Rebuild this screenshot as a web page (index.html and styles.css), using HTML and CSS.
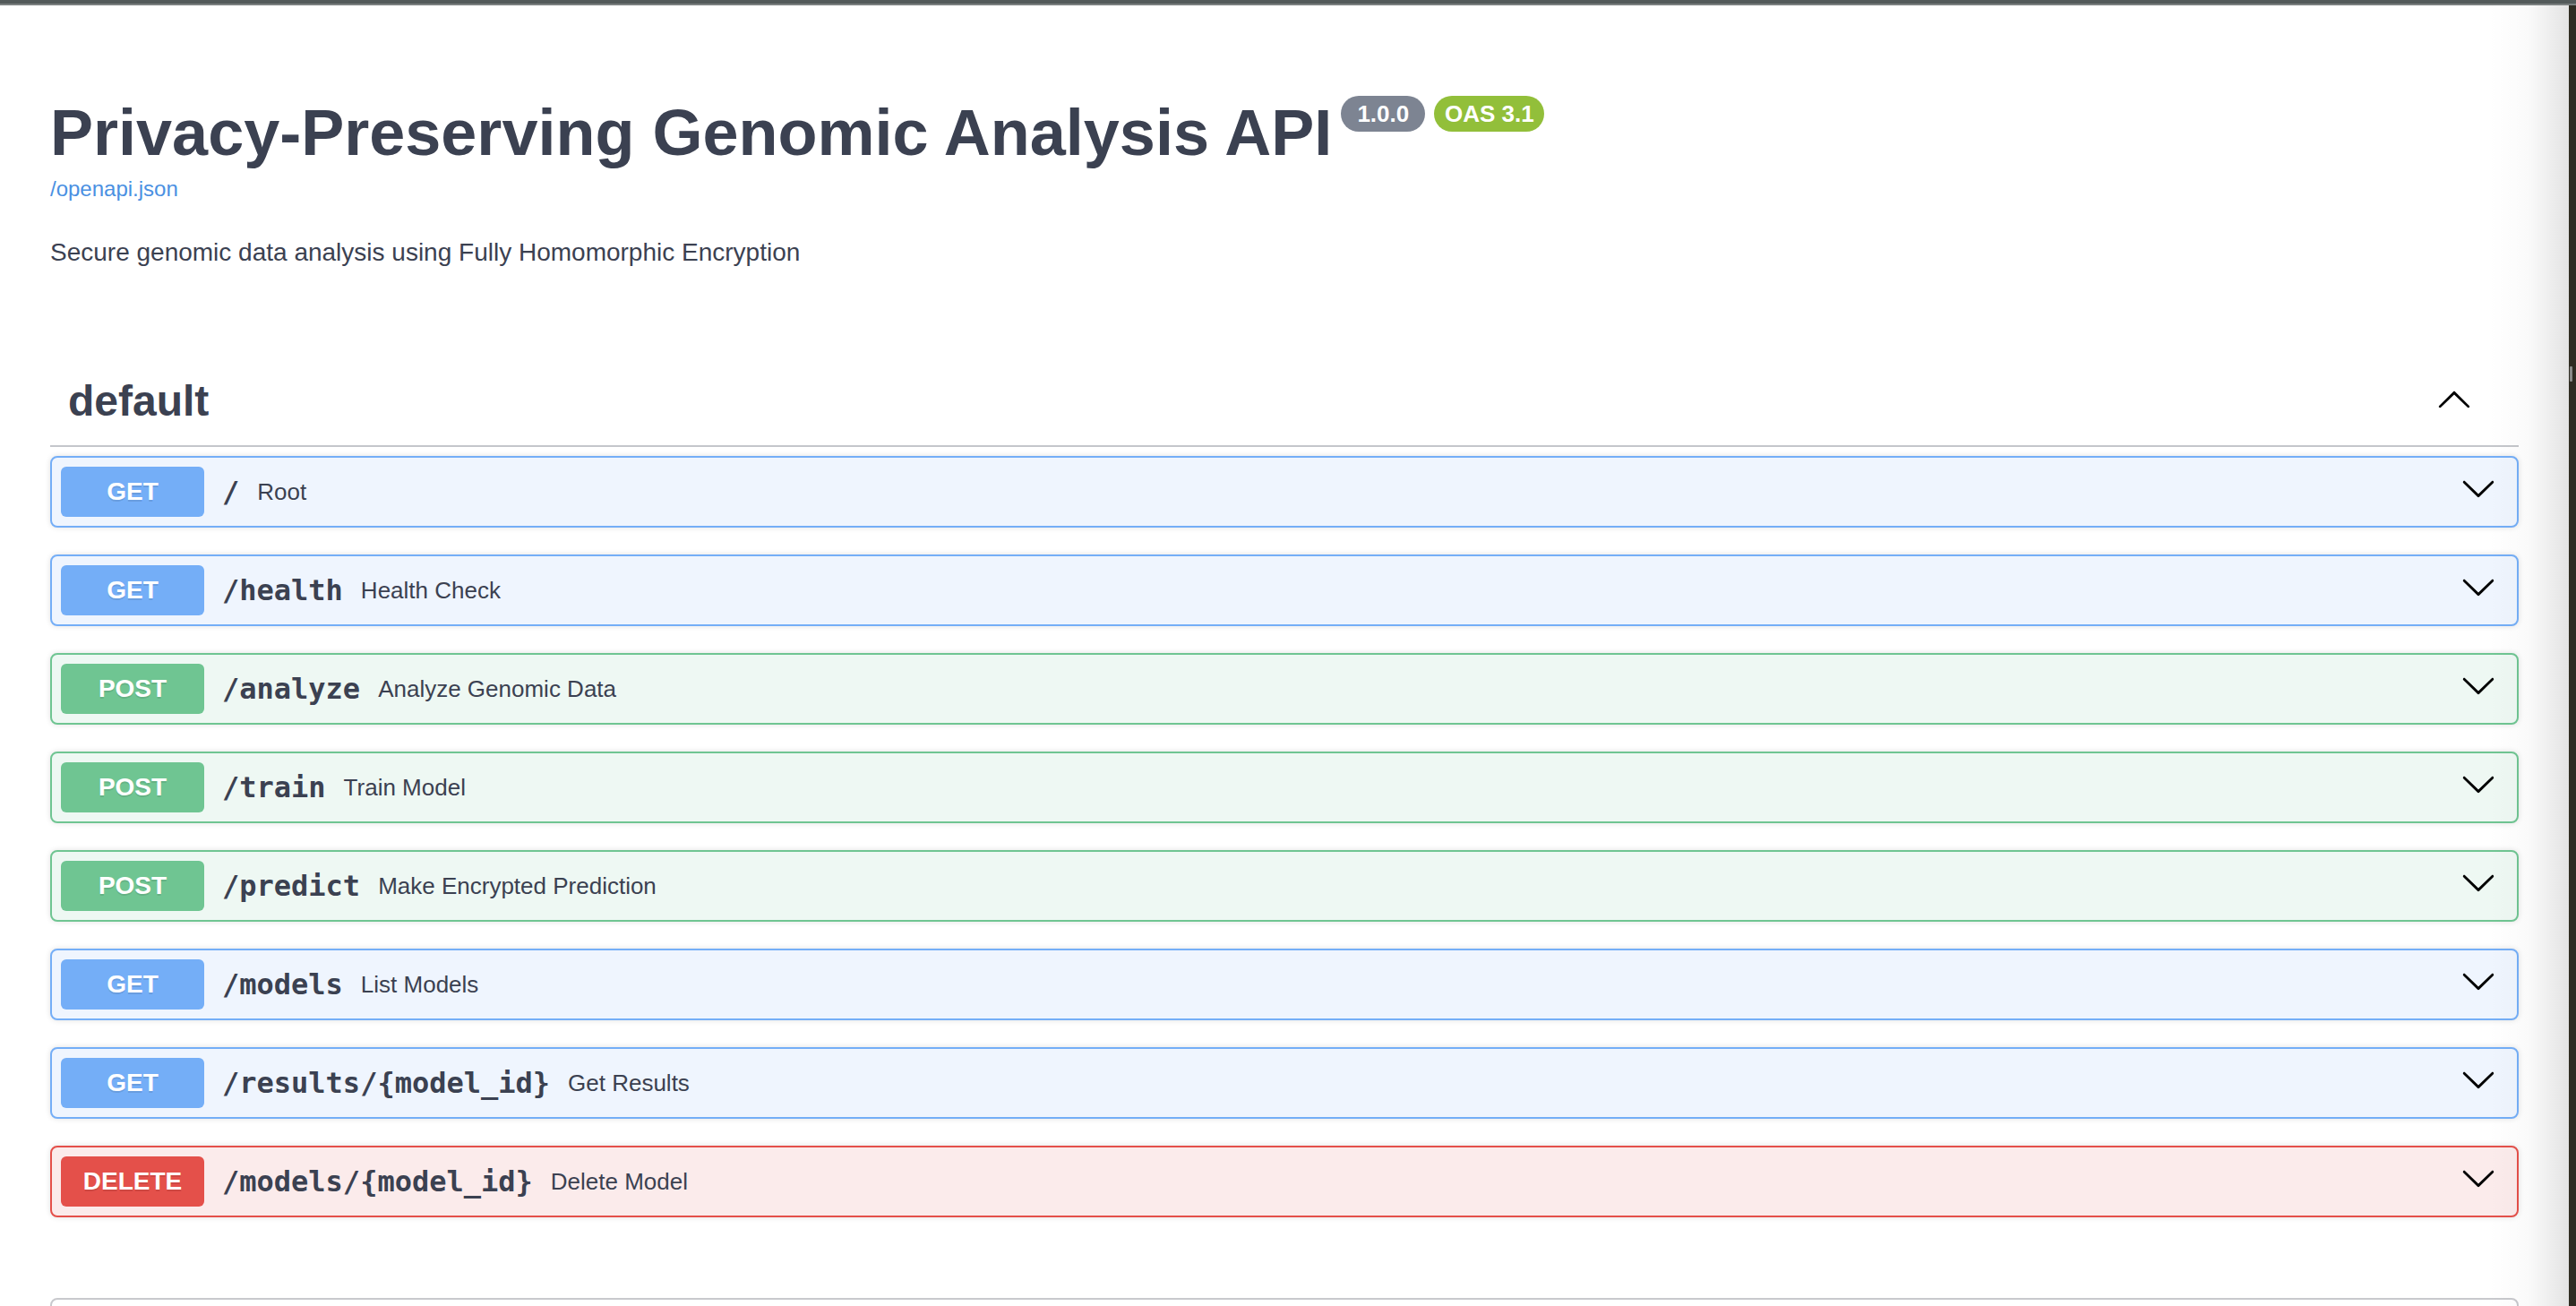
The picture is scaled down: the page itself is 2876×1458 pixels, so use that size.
FILE: index.html
```html
<!DOCTYPE html>
<html lang="en">
<head>
<meta charset="utf-8">
<title>Privacy-Preserving Genomic Analysis API - Swagger UI</title>
<link rel="stylesheet" href="styles.css">
</head>
<body>
<div class="topbar"></div>
<div class="window">
  <div class="page">
    <div class="wrapper">
      <header class="info">
        <div class="title-row">
          <h1 class="title">Privacy-Preserving Genomic Analysis API</h1>
          <span class="badge badge-version">1.0.0</span>
          <span class="badge badge-oas">OAS 3.1</span>
        </div>
        <a class="url" href="#">/openapi.json</a>
        <p class="description">Secure genomic data analysis using Fully Homomorphic Encryption</p>
      </header>

      <section class="tag-section">
        <div class="tag-header">
          <h3 class="tag-name">default</h3>
          <svg class="tag-arrow" viewBox="0 0 20 20" aria-hidden="true"><path d="M17.418 14.908c.272.268.709.268.979 0s.271-.701 0-.969l-7.908-7.83c-.27-.268-.707-.268-.979 0l-7.908 7.83c-.27.268-.27.701 0 .969.271.268.709.268.979 0L10 7.767l7.418 7.141z"/></svg>
        </div>

        <div class="opblock get">
          <span class="method">GET</span>
          <span class="path">/</span>
          <span class="summary">Root</span>
          <svg class="arrow" viewBox="0 0 20 20" aria-hidden="true"><path d="M17.418 6.109c.272-.268.709-.268.979 0s.271.701 0 .969l-7.908 7.83c-.27.268-.707.268-.979 0l-7.908-7.83c-.27-.268-.27-.701 0-.969.271-.268.709-.268.979 0L10 13.25l7.418-7.141z"/></svg>
        </div>

        <div class="opblock get">
          <span class="method">GET</span>
          <span class="path">/health</span>
          <span class="summary">Health Check</span>
          <svg class="arrow" viewBox="0 0 20 20" aria-hidden="true"><path d="M17.418 6.109c.272-.268.709-.268.979 0s.271.701 0 .969l-7.908 7.83c-.27.268-.707.268-.979 0l-7.908-7.83c-.27-.268-.27-.701 0-.969.271-.268.709-.268.979 0L10 13.25l7.418-7.141z"/></svg>
        </div>

        <div class="opblock post">
          <span class="method">POST</span>
          <span class="path">/analyze</span>
          <span class="summary">Analyze Genomic Data</span>
          <svg class="arrow" viewBox="0 0 20 20" aria-hidden="true"><path d="M17.418 6.109c.272-.268.709-.268.979 0s.271.701 0 .969l-7.908 7.83c-.27.268-.707.268-.979 0l-7.908-7.83c-.27-.268-.27-.701 0-.969.271-.268.709-.268.979 0L10 13.25l7.418-7.141z"/></svg>
        </div>

        <div class="opblock post">
          <span class="method">POST</span>
          <span class="path">/train</span>
          <span class="summary">Train Model</span>
          <svg class="arrow" viewBox="0 0 20 20" aria-hidden="true"><path d="M17.418 6.109c.272-.268.709-.268.979 0s.271.701 0 .969l-7.908 7.83c-.27.268-.707.268-.979 0l-7.908-7.83c-.27-.268-.27-.701 0-.969.271-.268.709-.268.979 0L10 13.25l7.418-7.141z"/></svg>
        </div>

        <div class="opblock post">
          <span class="method">POST</span>
          <span class="path">/predict</span>
          <span class="summary">Make Encrypted Prediction</span>
          <svg class="arrow" viewBox="0 0 20 20" aria-hidden="true"><path d="M17.418 6.109c.272-.268.709-.268.979 0s.271.701 0 .969l-7.908 7.83c-.27.268-.707.268-.979 0l-7.908-7.83c-.27-.268-.27-.701 0-.969.271-.268.709-.268.979 0L10 13.25l7.418-7.141z"/></svg>
        </div>

        <div class="opblock get">
          <span class="method">GET</span>
          <span class="path">/models</span>
          <span class="summary">List Models</span>
          <svg class="arrow" viewBox="0 0 20 20" aria-hidden="true"><path d="M17.418 6.109c.272-.268.709-.268.979 0s.271.701 0 .969l-7.908 7.83c-.27.268-.707.268-.979 0l-7.908-7.83c-.27-.268-.27-.701 0-.969.271-.268.709-.268.979 0L10 13.25l7.418-7.141z"/></svg>
        </div>

        <div class="opblock get">
          <span class="method">GET</span>
          <span class="path">/results/{model_id}</span>
          <span class="summary">Get Results</span>
          <svg class="arrow" viewBox="0 0 20 20" aria-hidden="true"><path d="M17.418 6.109c.272-.268.709-.268.979 0s.271.701 0 .969l-7.908 7.83c-.27.268-.707.268-.979 0l-7.908-7.83c-.27-.268-.27-.701 0-.969.271-.268.709-.268.979 0L10 13.25l7.418-7.141z"/></svg>
        </div>

        <div class="opblock delete">
          <span class="method">DELETE</span>
          <span class="path">/models/{model_id}</span>
          <span class="summary">Delete Model</span>
          <svg class="arrow" viewBox="0 0 20 20" aria-hidden="true"><path d="M17.418 6.109c.272-.268.709-.268.979 0s.271.701 0 .969l-7.908 7.83c-.27.268-.707.268-.979 0l-7.908-7.83c-.27-.268-.27-.701 0-.969.271-.268.709-.268.979 0L10 13.25l7.418-7.141z"/></svg>
        </div>
      </section>

      <section class="models"></section>
    </div>
    <div class="edge-shade"></div>
  </div>
  <div class="scroll-strip"><div class="thumb"></div></div>
</div>
</body>
</html>
```

FILE: styles.css
```css
html, body {
  margin: 0;
  padding: 0;
  height: 100%;
  overflow: hidden;
  background: #ffffff;
}

body {
  font-family: "Liberation Sans", Arial, Helvetica, sans-serif;
  color: #3b4151;
  display: flex;
  flex-direction: column;
}

.topbar {
  height: 4px;
  background: #535a5a;
  border-bottom: 2px solid #7b8080;
  flex: none;
}

.window {
  flex: 1;
  display: flex;
  min-height: 0;
}

.page {
  flex: 1;
  min-width: 0;
  position: relative;
  overflow: hidden;
}

.wrapper {
  padding: 0 56px;
  display: flex;
  flex-direction: column;
}

/* ---------- info ---------- */
.info {
  display: flex;
  flex-direction: column;
  align-items: flex-start;
}

.title-row {
  display: flex;
  align-items: flex-start;
  margin-top: 101px;
}

.title {
  margin: 0;
  font-size: 72px;
  line-height: 82px;
  font-weight: 700;
  color: #3b4151;
}

.badge {
  height: 40px;
  line-height: 40px;
  border-radius: 20px;
  color: #ffffff;
  font-size: 26px;
  font-weight: 700;
  text-align: center;
  margin-left: 10px;
  box-sizing: border-box;
}

.badge-version {
  width: 94px;
  background: #7d8492;
}

.badge-oas {
  width: 123px;
  background: #92bf3a;
}

.url {
  margin-top: 8px;
  font-size: 24px;
  line-height: 28px;
  color: #4a90e2;
  text-decoration: none;
}

.description {
  margin: 37px 0 0;
  font-size: 28px;
  line-height: 40px;
  color: #3b4151;
}

/* ---------- tag ---------- */
.tag-section {
  display: flex;
  flex-direction: column;
  margin-top: 98px;
}

.tag-header {
  display: flex;
  align-items: center;
  padding: 20px 52px 21px 20px;
  border-bottom: 2px solid #c4c6cb;
  margin-bottom: 10px;
}

.tag-name {
  flex: 1;
  margin: 0;
  font-size: 48px;
  line-height: 56px;
  font-weight: 700;
  color: #3b4151;
}

.tag-arrow {
  width: 40px;
  height: 40px;
  fill: #000000;
  margin-bottom: 6px;
}

/* ---------- operations ---------- */
.opblock {
  display: flex;
  align-items: center;
  border: 2px solid;
  border-radius: 8px;
  padding: 10px;
  margin-bottom: 30px;
  box-shadow: 0 0 6px rgba(0, 0, 0, 0.12);
}

.method {
  flex: none;
  min-width: 160px;
  padding: 12px 0;
  border-radius: 6px;
  font-size: 28px;
  line-height: 32px;
  font-weight: 700;
  color: #ffffff;
  text-align: center;
  text-shadow: 0 2px 0 rgba(0, 0, 0, 0.1);
}

.path {
  padding: 0 20px;
  font-family: "DejaVu Sans Mono", "Liberation Mono", monospace;
  font-size: 32px;
  line-height: 40px;
  font-weight: 700;
  color: #3b4151;
}

.summary {
  flex: 1;
  font-size: 26px;
  line-height: 32px;
  color: #3b4151;
}

.arrow {
  flex: none;
  width: 40px;
  height: 40px;
  fill: #000000;
  margin-right: 13px;
  margin-bottom: 8px;
}

.opblock.get {
  background: #eff5fe;
  border-color: #74aef7;
}
.opblock.get .method {
  background: #74aef7;
}

.opblock.post {
  background: #eef8f3;
  border-color: #6fc592;
}
.opblock.post .method {
  background: #6fc592;
}

.opblock.delete {
  background: #fbebeb;
  border-color: #e4504a;
}
.opblock.delete .method {
  background: #e4504a;
}

/* ---------- models ---------- */
.models {
  margin-top: 60px;
  height: 200px;
  border: 2px solid #c8c9cd;
  border-radius: 8px;
}

/* ---------- window chrome ---------- */
.edge-shade {
  position: absolute;
  top: 0;
  right: 0;
  bottom: 0;
  width: 90px;
  pointer-events: none;
  background: linear-gradient(to right, rgba(0, 0, 0, 0) 0%, rgba(0, 0, 0, 0.02) 50%, rgba(0, 0, 0, 0.11) 100%);
}

.scroll-strip {
  flex: none;
  width: 8px;
  background: #2f2c22;
  padding-top: 403px;
  box-sizing: border-box;
}

.thumb {
  width: 3px;
  height: 17px;
  margin-left: 1px;
  background: #8a8a88;
  border-radius: 1px;
}
```
